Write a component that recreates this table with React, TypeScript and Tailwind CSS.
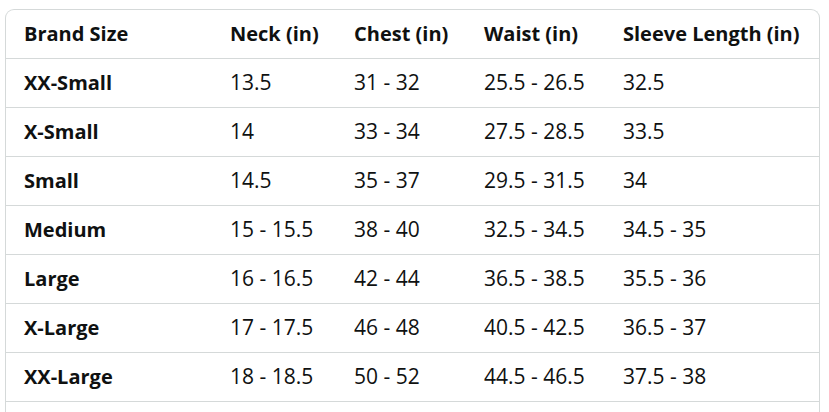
const headers = ["Brand Size", "Neck (in)", "Chest (in)", "Waist (in)", "Sleeve Length (in)"]

const rows = [
  ["XX-Small", "13.5", "31 - 32", "25.5 - 26.5", "32.5"],
  ["X-Small", "14", "33 - 34", "27.5 - 28.5", "33.5"],
  ["Small", "14.5", "35 - 37", "29.5 - 31.5", "34"],
  ["Medium", "15 - 15.5", "38 - 40", "32.5 - 34.5", "34.5 - 35"],
  ["Large", "16 - 16.5", "42 - 44", "36.5 - 38.5", "35.5 - 36"],
  ["X-Large", "17 - 17.5", "46 - 48", "40.5 - 42.5", "36.5 - 37"],
  ["XX-Large", "18 - 18.5", "50 - 52", "44.5 - 46.5", "37.5 - 38"],
]

const widths = ["w-[206px]", "w-[124px]", "w-[130px]", "w-[139px]", "w-[214px]"]

export default function App() {
  return (
    <div className="bg-white h-[412px] overflow-hidden pt-[9px] pl-[5px] text-[#0f1111] font-['Open_Sans',sans-serif]">
      <div className="w-[815px] border border-b-0 border-[#d5d9d9] rounded-t-[9px]">
        <div className="flex h-[49px] border-b border-[#d5d9d9]">
          {headers.map((h, i) => (
            <div key={h} className={`${widths[i]} flex items-center pl-[18px] text-[20px] font-bold whitespace-nowrap`}>
              {h}
            </div>
          ))}
        </div>
        {rows.map((r) => (
          <div key={r[0]} className="flex h-[49px] border-b border-[#d5d9d9]">
            {r.map((c, i) => (
              <div
                key={i}
                className={`${widths[i]} flex items-center pl-[18px] whitespace-nowrap ${i === 0 ? "text-[20px] font-bold" : "text-[21px]"}`}
              >
                {c}
              </div>
            ))}
          </div>
        ))}
        <div className="h-[49px]" />
      </div>
    </div>
  )
}
